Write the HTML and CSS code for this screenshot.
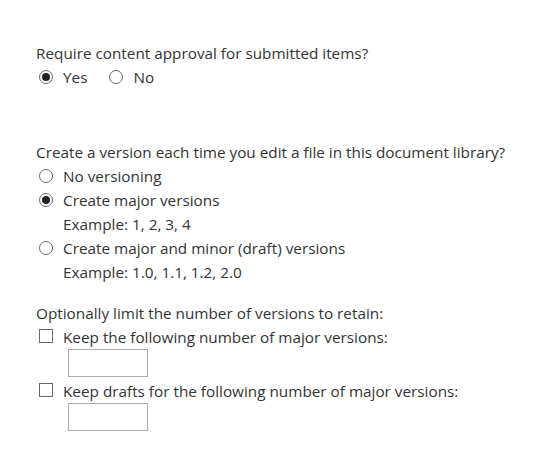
FILE: index.html
```html
<!DOCTYPE html>
<html>
<head>
<meta charset="utf-8">
<link rel="stylesheet" href="styles.css">
</head>
<body>
<div class="page">
  <section class="group g1">
    <div class="question">Require content approval for submitted items?</div>
    <div class="inline-options">
      <label class="opt"><span class="radio checked"></span><span>Yes</span></label>
      <label class="opt"><span class="radio"></span><span>No</span></label>
    </div>
  </section>

  <section class="group g2">
    <div class="question">Create a version each time you edit a file in this document library?</div>
    <label class="opt"><span class="radio"></span><span>No versioning</span></label>
    <label class="opt"><span class="radio checked"></span><span>Create major versions</span></label>
    <div class="example">Example: 1, 2, 3, 4</div>
    <label class="opt"><span class="radio"></span><span>Create major and minor (draft) versions</span></label>
    <div class="example">Example: 1.0, 1.1, 1.2, 2.0</div>
  </section>

  <section class="group g3">
    <div class="question">Optionally limit the number of versions to retain:</div>
    <label class="opt"><span class="check"></span><span>Keep the following number of major versions:</span></label>
    <div class="field"><span class="textbox"></span></div>
    <label class="opt"><span class="check"></span><span>Keep drafts for the following number of major versions:</span></label>
    <div class="field"><span class="textbox"></span></div>
  </section>
</div>
</body>
</html>
```
FILE: styles.css
```css
html, body {
  margin: 0;
  padding: 0;
  background: #ffffff;
}
body {
  font-family: "Open Sans", "Noto Sans", sans-serif;
  font-size: 15.3px;
  color: #333333;
  line-height: 24px;
}
.page {
  padding: 41px 0 0 36px;
}
.group {
  display: flex;
  flex-direction: column;
}
.g2 { margin-top: 51px; }
.g3 { margin-top: 17px; }
.question {
  height: 24px;
}
.inline-options {
  display: flex;
  gap: 22px;
  padding-left: 3px;
}
.opt {
  display: flex;
  align-items: center;
  gap: 10px;
  padding-left: 3px;
  height: 24px;
}
.inline-options .opt { padding-left: 0; }
.radio {
  width: 12px;
  height: 12px;
  border: 1px solid #666666;
  border-radius: 50%;
  display: flex;
  align-items: center;
  justify-content: center;
  flex: none;
}
.radio.checked::after {
  content: "";
  width: 8px;
  height: 8px;
  border-radius: 50%;
  background: #222222;
}
.check {
  width: 12px;
  height: 12px;
  border: 1px solid #666666;
  margin-top: -2px;
  flex: none;
}
.example {
  padding-left: 27px;
}
.field {
  padding: 0 0 0 32px;
  height: 30px;
}
.textbox {
  width: 78px;
  height: 26px;
  border: 1px solid #ababab;
  display: block;
}
```
